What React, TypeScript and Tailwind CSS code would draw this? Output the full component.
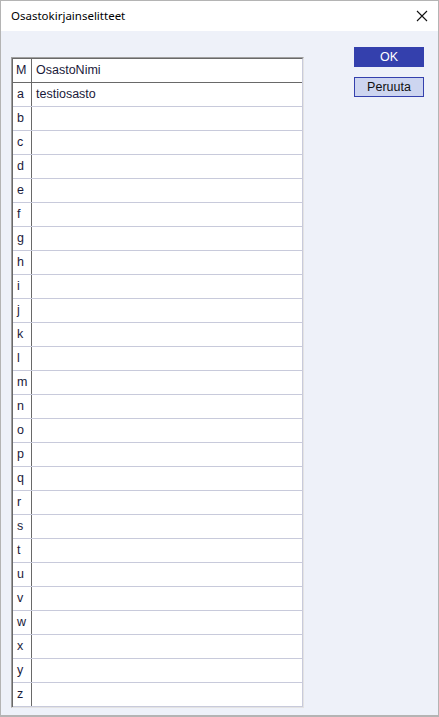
import React from "react";

const letters = "abcdefghijklmnopqrstuvwxyz".split("");

export default function App() {
  return (
    <div className="w-[439px] h-[717px] bg-[#eef1f9] border border-[#b4b4b4] border-b-2 flex flex-col" style={{ fontFamily: '"Liberation Sans", Arial, sans-serif' }}>
      <div className="h-[30px] shrink-0 bg-white flex items-center justify-between pl-[10px] pr-[8px]">
        <span className="text-[11.5px] text-black" style={{ fontFamily: '"Noto Sans", "Liberation Sans", sans-serif' }}>Osastokirjainselitteet</span>
        <svg width="14" height="14" viewBox="0 0 14 14" className="mr-[1px]">
          <path d="M2 2 L12 12 M12 2 L2 12" stroke="#111" strokeWidth="1.1" fill="none" />
        </svg>
      </div>
      <div className="flex flex-1 pl-[10px] pt-[26px]">
        <div className="w-[293px] h-[651px] border border-[#a0a0a0] border-r-[#e3e3e3] border-b-[#e3e3e3] bg-white">
          <div className="border-l border-t border-[#696969] border-r border-r-[#c8cadb] h-full">
            <div className="flex h-[24px] border-b border-[#696969] text-[12.5px] text-[#1a1a3a]">
              <div className="w-[19px] border-r border-[#696969] flex items-center pl-[3px]">M</div>
              <div className="flex-1 flex items-center pl-[4px]">OsastoNimi</div>
            </div>
            {letters.map((l, i) => (
              <div key={l} className="flex h-[24px] text-[12.5px] text-[#1a1a3a] border-b border-[#c8cadb]">
                <div className="w-[19px] border-r border-[#696969] flex items-center pl-[4px]">{l}</div>
                <div className="flex-1 flex items-center pl-[4px]">{i === 0 ? "testiosasto" : ""}</div>
              </div>
            ))}
          </div>
        </div>
        <div className="flex flex-col ml-[50px] -mt-[10px] gap-[10px]">
          <button className="w-[70px] h-[20px] bg-[#3440ad] text-white text-[12.5px] flex items-center justify-center">OK</button>
          <button className="w-[70px] h-[20px] bg-[#cdd5f0] border border-[#3440ad] text-[#111] text-[12.5px] flex items-center justify-center">Peruuta</button>
        </div>
      </div>
    </div>
  );
}
